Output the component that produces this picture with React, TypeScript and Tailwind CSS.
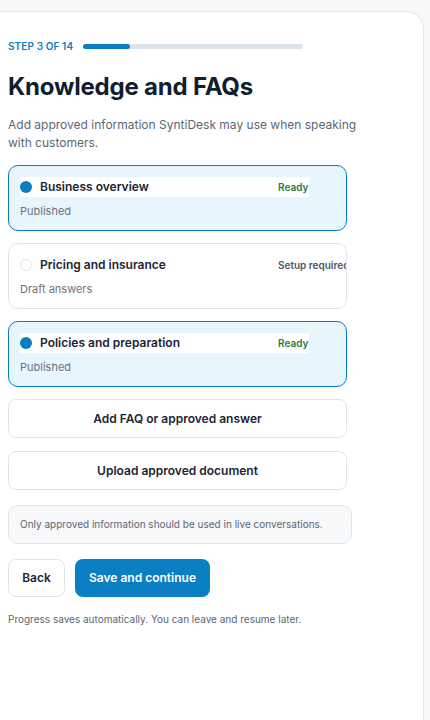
const font = { fontFamily: "Inter, 'Liberation Sans', sans-serif" };

type Topic = {
  title: string;
  note: string;
  status: string;
  ready: boolean;
};

const topics: Topic[] = [
  { title: "Business overview", note: "Published", status: "Ready", ready: true },
  { title: "Pricing and insurance", note: "Draft answers", status: "Setup required", ready: false },
  { title: "Policies and preparation", note: "Published", status: "Ready", ready: true },
];

const TopicCard = ({ topic }: { topic: Topic }) => (
  <div
    className={
      topic.ready
        ? "h-[66px] overflow-hidden rounded-[10px] border border-[#0b7dc1] bg-[#e7f5fd] px-[11px] pt-[11px]"
        : "h-[66px] overflow-hidden rounded-[10px] border border-[#dfe4ea] bg-white px-[11px] pt-[11px]"
    }
  >
    <div className="flex h-[20px] w-[289px] items-center bg-white">
      {topic.ready ? (
        <span className="h-[12px] w-[12px] shrink-0 rounded-full bg-[#0b7dc1]" />
      ) : (
        <span className="h-[12px] w-[12px] shrink-0 rounded-full border border-[#dfe4ea] bg-white" />
      )}
      <span className="ml-[8px] flex-1 text-[12px] font-semibold text-[#1b2533]">{topic.title}</span>
      <span
        className={
          topic.ready
            ? "w-[31px] whitespace-nowrap text-[10px] font-semibold text-[#1f7d45]"
            : "w-[31px] whitespace-nowrap text-[10px] font-semibold text-[#4b5563]"
        }
      >
        {topic.status}
      </span>
    </div>
    <div className="mt-[6px] text-[11px] leading-[16px] text-[#6b7480]">{topic.note}</div>
  </div>
);

export default function App() {
  return (
    <div className="min-h-[720px] bg-[#f6f8fa] pt-[11px]" style={font}>
      <div className="min-h-[709px] w-[424px] rounded-tr-[18px] border-t border-r border-[#e1e6ec] bg-white pl-[8px] pt-[27px]">
        {/* step progress */}
        <div className="flex items-center">
          <span className="text-[10px] font-semibold tracking-[0.1px] text-[#0b7dc1]">STEP 3 OF 14</span>
          <div className="ml-[10px] h-[5px] w-[220px] rounded-full bg-[#dde3ea]">
            <div className="h-[5px] rounded-full bg-[#0b7dc1]" style={{ width: `${(3 / 14) * 100}%` }} />
          </div>
        </div>

        <h1 className="mt-[18px] text-[24px] font-bold leading-[30px] tracking-[-0.2px] text-[#0f1e30]">
          Knowledge and FAQs
        </h1>
        <p className="mt-[14px] w-[360px] text-[12px] leading-[18px] text-[#5c6775]">
          Add approved information SyntiDesk may use when speaking with customers.
        </p>

        <div className="mt-[13px] flex w-[339px] flex-col gap-[12px]">
          {topics.map((t) => (
            <TopicCard key={t.title} topic={t} />
          ))}
        </div>

        <div className="mt-[12px] flex w-[339px] flex-col gap-[13px]">
          <button className="h-[39px] rounded-[8px] border border-[#dfe4ea] bg-white text-[12px] font-semibold text-[#1b2533]">
            Add FAQ or approved answer
          </button>
          <button className="h-[39px] rounded-[8px] border border-[#dfe4ea] bg-white text-[12px] font-semibold text-[#1b2533]">
            Upload approved document
          </button>
        </div>

        <div className="mt-[15px] flex h-[39px] w-[344px] items-center rounded-[10px] border border-[#dfe4ea] bg-[#f6f8fa] px-[11px] text-[10px] text-[#5c6775]">
          Only approved information should be used in live conversations.
        </div>

        <div className="mt-[15px] flex gap-[10px]">
          <button className="h-[38px] w-[57px] rounded-[8px] border border-[#dfe4ea] bg-white text-[12px] font-semibold text-[#1b2533]">
            Back
          </button>
          <button className="h-[38px] w-[135px] rounded-[8px] bg-[#0b7fc3] text-[12px] font-semibold text-white">
            Save and continue
          </button>
        </div>

        <p className="mt-[15px] text-[10px] leading-[14px] text-[#5c6775]">
          Progress saves automatically. You can leave and resume later.
        </p>
      </div>
    </div>
  );
}
